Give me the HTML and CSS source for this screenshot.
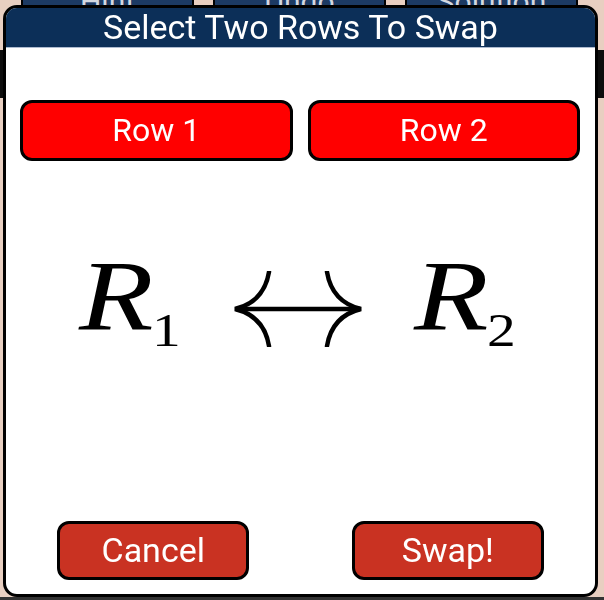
FILE: index.html
```html
<!DOCTYPE html>
<html lang="en">
<head>
<meta charset="utf-8">
<title>Select Two Rows To Swap</title>
<link rel="stylesheet" href="styles.css">
</head>
<body>
  <div class="app">
    <div class="toolbar">
      <button class="tool">Hint</button>
      <button class="tool">Undo</button>
      <button class="tool">Solution</button>
    </div>
    <div class="band"></div>
    <div class="board"></div>
    <div class="footer-bar"></div>
  </div>

  <div class="modal">
    <div class="modal-header">Select Two Rows To Swap</div>
    <div class="modal-body">
      <div class="row-picks">
        <button class="row-btn">Row 1</button>
        <button class="row-btn">Row 2</button>
      </div>
      <div class="math">
        <span class="term term-left"><span class="var">R</span><span class="sub">1</span></span>
        <svg class="arrow" width="130" height="76" viewBox="0 0 130 76">
          <path d="M3 38 H127" fill="none" stroke="#000" stroke-width="4.5"/>
          <path d="M36 1 Q31 31 2 38 Q31 45 36 75" fill="none" stroke="#000" stroke-width="4.5" stroke-linecap="round" stroke-linejoin="miter"/>
          <path d="M94 1 Q99 31 128 38 Q99 45 94 75" fill="none" stroke="#000" stroke-width="4.5" stroke-linecap="round" stroke-linejoin="miter"/>
        </svg>
        <span class="term"><span class="var">R</span><span class="sub">2</span></span>
      </div>
      <div class="spacer"></div>
      <div class="actions">
        <button class="act-btn">Cancel</button>
        <button class="act-btn">Swap!</button>
      </div>
    </div>
  </div>
</body>
</html>
```
FILE: styles.css
```css
html, body {
  margin: 0;
  padding: 0;
  height: 100%;
}

body {
  background: #e8cfc1;
  overflow: hidden;
  font-family: Roboto, "Liberation Sans", sans-serif;
}

.app {
  height: 600px;
  display: flex;
  flex-direction: column;
}

.toolbar {
  height: 80px;
  margin-top: -30px;
  padding: 0 21px;
  display: flex;
  gap: 19px;
  align-items: flex-start;
  box-sizing: border-box;
}

.tool {
  width: 173px;
  height: 60px;
  background: #1c3a63;
  color: #d4d8e0;
  border: 2px solid #000;
  border-radius: 8px;
  font-family: Roboto, sans-serif;
  font-size: 30px;
  padding: 0;
  padding-top: 2px;
}

.band {
  height: 48px;
  background: #0d0d0d;
}

.board {
  flex: 1;
}

.footer-bar {
  height: 3px;
  background: #333;
}

.modal {
  position: fixed;
  left: 3px;
  top: 5px;
  width: 595px;
  height: 592px;
  box-sizing: border-box;
  border: 3px solid #000;
  border-radius: 14px;
  background: #fff;
  overflow: hidden;
  display: flex;
  flex-direction: column;
}

.modal-header {
  height: 39px;
  line-height: 38px;
  background: #0c2f58;
  color: #fff;
  font-size: 34px;
  text-align: center;
  border-bottom: 1px solid #aebbd0;
  flex: none;
}

.modal-body {
  flex: 1;
  display: flex;
  flex-direction: column;
}

.row-picks {
  display: flex;
  gap: 15px;
  padding: 0 15px 0 14px;
  margin-top: 52px;
}

.row-btn {
  flex: 1;
  height: 61px;
  background: #ff0000;
  color: #fff;
  border: 3px solid #000;
  border-radius: 12px;
  font-family: Roboto, sans-serif;
  font-size: 32px;
  padding: 0 0 2px;
}

.math {
  margin-top: 85px;
  padding-right: 12px;
  font-family: "Liberation Serif", serif;
  font-size: 0;
  line-height: 1;
  text-align: center;
  white-space: nowrap;
}

.term {
  display: inline-block;
}

.var {
  display: inline-block;
  font-size: 100px;
  font-style: italic;
  transform: scaleX(1.22);
  transform-origin: left bottom;
}

.sub {
  display: inline-block;
  font-size: 46px;
  vertical-align: -17px;
  margin-left: 12px;
  transform: scaleX(1.25);
  transform-origin: left bottom;
}

.arrow {
  vertical-align: -18px;
  margin: 0 51px 0 58px;
}

.spacer {
  flex: 1;
}

.actions {
  display: flex;
  justify-content: space-around;
  padding-bottom: 14px;
}

.act-btn {
  width: 192px;
  height: 59px;
  background: #c93222;
  color: #fff;
  border: 3px solid #000;
  border-radius: 12px;
  font-family: Roboto, sans-serif;
  font-size: 34px;
  padding: 0 0 2px;
}
```
